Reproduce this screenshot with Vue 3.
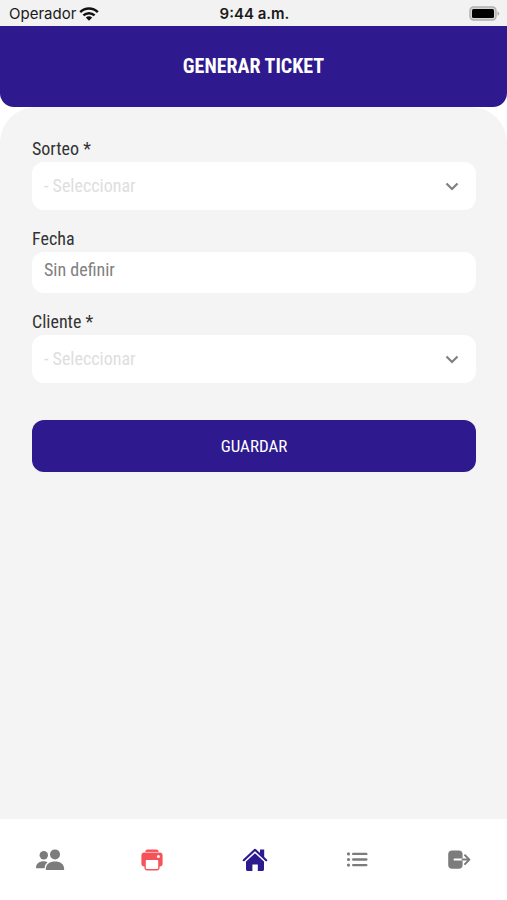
<script setup>
import { ref } from 'vue'

const sorteo = ref('')
const cliente = ref('')
const fecha = ref('Sin definir')
</script>

<template>
  <div class="screen">
    <div class="status">
      <div class="carrier">
        <span>Operador</span>
        <svg width="20" height="14" viewBox="0 0 20 14" aria-hidden="true">
          <g fill="none" stroke="#111" stroke-width="2.5">
            <path d="M1.2 5.2C6.2 .4 13.8 .4 18.8 5.2" />
            <path d="M4.4 8.4C7.6 5.4 12.4 5.4 15.6 8.4" />
          </g>
          <path d="M6.8 10.5C8.6 8.9 11.4 8.9 13.2 10.5L10 13.7Z" fill="#111" />
        </svg>
      </div>
      <div class="clock">9:44 a.m.</div>
      <div class="battery">
        <svg width="31" height="15" viewBox="0 0 31 15" aria-hidden="true">
          <rect x="1" y="1" width="26" height="13" rx="3.5" fill="#d4d4d4" stroke="#b0b0b0" stroke-width="1.4" />
          <rect x="3" y="3" width="22" height="9" rx="1.5" fill="#000" />
          <path d="M28.5 5.2Q32 7.5 28.5 9.8Z" fill="#aaa" />
        </svg>
      </div>
    </div>

    <header class="header">
      <h1>GENERAR TICKET</h1>
    </header>

    <main class="content">
      <form class="form" @submit.prevent>
        <div class="field">
          <label for="sorteo">Sorteo *</label>
          <div class="picker">
            <select id="sorteo" v-model="sorteo">
              <option value="">- Seleccionar</option>
            </select>
            <svg width="14" height="9" viewBox="0 0 14 9" aria-hidden="true">
              <path d="M1.5 1.5L7 7L12.5 1.5" fill="none" stroke="#808080" stroke-width="2.2" />
            </svg>
          </div>
        </div>
        <div class="field">
          <label for="fecha">Fecha</label>
          <input id="fecha" v-model="fecha" type="text" readonly />
        </div>
        <div class="field">
          <label for="cliente">Cliente *</label>
          <div class="picker">
            <select id="cliente" v-model="cliente">
              <option value="">- Seleccionar</option>
            </select>
            <svg width="14" height="9" viewBox="0 0 14 9" aria-hidden="true">
              <path d="M1.5 1.5L7 7L12.5 1.5" fill="none" stroke="#808080" stroke-width="2.2" />
            </svg>
          </div>
        </div>
        <button class="save" type="submit">GUARDAR</button>
      </form>
    </main>

    <nav class="tabs">
      <a href="#clientes" aria-label="Clientes">
        <svg width="30" height="24" viewBox="0 0 30 24" fill="#7c7c7c">
          <circle cx="8.8" cy="7.2" r="4.2" />
          <path d="M1 20.2C1 15.5 4.2 13.3 8.6 13.3C10.2 13.3 11.6 13.6 12.6 14.2C10.6 15.6 9.8 17.6 9.6 20.2Z" />
          <circle cx="20" cy="6.4" r="5" />
          <path d="M10.8 21.6C10.8 16 14.6 13.5 20 13.5S29.2 16 29.2 21.6Q29.2 22 28.8 22H11.2Q10.8 22 10.8 21.6Z" />
        </svg>
      </a>
      <a href="#ticket" aria-label="Generar ticket">
        <svg width="24" height="24" viewBox="0 0 24 24">
          <path d="M5.4 3.6Q5.4 1.4 7.6 1.4H16.4Q18.6 1.4 18.6 3.6V5H5.4Z" fill="#f5525a" />
          <path d="M4.4 4.6H19.6Q22.6 4.6 22.6 7.6V15.6Q22.6 18.6 19.6 18.6V20Q19.6 22.4 17.2 22.4H6.8Q4.4 22.4 4.4 20V18.6Q1.4 18.6 1.4 15.6V7.6Q1.4 4.6 4.4 4.6Z" fill="#f5525a" />
          <path d="M5 4.4H19" stroke="#fbb9bc" stroke-width="1" />
          <rect x="5.8" y="12" width="12.4" height="9" rx=".8" fill="#fff" />
          <circle cx="18.4" cy="8.4" r="1.5" fill="#fff" />
        </svg>
      </a>
      <a href="#inicio" aria-label="Inicio">
        <svg width="26" height="26" viewBox="0 0 26 26">
          <path d="M18 2.4H22.2V11L18 7Z" fill="#2e1a8e" />
          <path d="M13 5.6L22 14V22.6Q22 24 20.6 24H15.8V17.6H10.4V24H5.4Q4 24 4 22.6V14Z" fill="#2e1a8e" />
          <path d="M3 14.4L13 5.2L23 14.4" fill="none" stroke="#fff" stroke-width="1.6" />
          <path d="M1.8 13.2L13 2.8L24.2 13.2" fill="none" stroke="#2e1a8e" stroke-width="2.2" stroke-linecap="round" stroke-linejoin="round" />
        </svg>
      </a>
      <a href="#lista" aria-label="Lista">
        <svg width="22" height="18" viewBox="0 0 22 18" fill="#7c7c7c">
          <circle cx="2.5" cy="2.9" r="1.6" />
          <circle cx="2.5" cy="8.5" r="1.6" />
          <circle cx="2.5" cy="14.1" r="1.6" />
          <rect x="6" y="1.7" width="15.5" height="2.4" rx="1.2" />
          <rect x="6" y="7.3" width="15.5" height="2.4" rx="1.2" />
          <rect x="6" y="12.9" width="15.5" height="2.4" rx="1.2" />
        </svg>
      </a>
      <a href="#salir" aria-label="Salir">
        <svg width="24" height="22" viewBox="0 0 24 22">
          <rect x="1.2" y="1.4" width="14.4" height="18.4" rx="4" fill="#7c7c7c" />
          <path d="M7.5 10.6H15.6" stroke="#fff" stroke-width="2" stroke-linecap="round" />
          <path d="M15.6 10.6H22M18 6.2L22.4 10.6L18 15" fill="none" stroke="#7c7c7c" stroke-width="2" stroke-linecap="round" stroke-linejoin="round" />
        </svg>
      </a>
    </nav>
  </div>
</template>

<style>
body {
  background: #fff;
}
</style>

<style scoped>
* {
  box-sizing: border-box;
}
.screen {
  display: flex;
  flex-direction: column;
  min-height: 100vh;
  background: #fff;
  font-family: "Roboto Condensed", "Liberation Sans Narrow", Roboto, sans-serif;
}
.status {
  display: grid;
  grid-template-columns: 1fr auto 1fr;
  align-items: center;
  height: 26px;
  padding: 1px 7px 0 9px;
  background: #f2f2f2;
  color: #1a1a1a;
  font: 15px/25px Inter, sans-serif;
}
.carrier {
  display: flex;
  align-items: center;
  gap: 3px;
}
.clock {
  font-weight: 600;
}
.battery {
  display: flex;
  justify-content: flex-end;
}
.header {
  display: flex;
  align-items: center;
  justify-content: center;
  height: 81px;
  padding-bottom: 2px;
  border-radius: 0 0 14px 14px;
  background: #2e1a8e;
}
h1 {
  margin: 0;
  color: #fff;
  font-size: 20px;
  font-weight: 700;
  line-height: 32px;
}
.content {
  flex: 1;
  padding: 30px 31px 30px 32px;
  border-radius: 36px 36px 0 0;
  background: #f4f4f4;
}
.form {
  display: flex;
  flex-direction: column;
  gap: 17px;
}
.field {
  display: flex;
  flex-direction: column;
  gap: 1px;
}
label {
  color: #333;
  font-size: 18px;
  line-height: 24px;
}
.picker {
  display: grid;
  grid-template-columns: 1fr 14px;
  align-items: center;
  padding-right: 17px;
  border-radius: 12px;
  background: #fff;
}
.picker select {
  grid-area: 1 / 1 / 2 / 3;
  height: 48px;
  padding: 0 12px 2px;
  border: 0;
  background: transparent;
  color: #dedede;
  font: inherit;
  font-size: 18px;
  appearance: none;
}
.picker svg {
  grid-area: 1 / 2 / 2 / 3;
  pointer-events: none;
}
input {
  width: 100%;
  height: 41px;
  padding: 0 12px 6px;
  border: 0;
  border-radius: 12px;
  background: #fff;
  color: #808080;
  font: inherit;
  font-size: 18px;
}
.save {
  height: 52px;
  margin-top: 20px;
  border: 0;
  border-radius: 12px;
  background: #2e1a8e;
  color: #fff;
  font: inherit;
  font-size: 17px;
}
.tabs {
  display: flex;
  justify-content: space-between;
  height: 81px;
  padding: 0 33px 0 35px;
  background: #fff;
}
.tabs a {
  display: flex;
  align-items: center;
  justify-content: center;
  width: 30px;
}
</style>
